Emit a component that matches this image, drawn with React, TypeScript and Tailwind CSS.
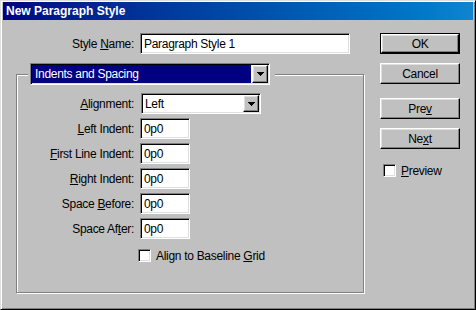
import React from "react";

const sunken =
  "border border-t-[#808080] border-l-[#808080] border-r-white border-b-white shadow-[inset_1px_1px_0_#000,inset_-1px_-1px_0_#dfdfdf]";
const raised =
  "border border-t-white border-l-white border-r-black border-b-black shadow-[inset_-1px_-1px_0_#808080,inset_1px_1px_0_#dfdfdf]";

function Arrow() {
  return (
    <svg width="7" height="4" viewBox="0 0 7 4" shapeRendering="crispEdges">
      <rect x="0" y="0" width="7" height="1" fill="#000" />
      <rect x="1" y="1" width="5" height="1" fill="#000" />
      <rect x="2" y="2" width="3" height="1" fill="#000" />
      <rect x="3" y="3" width="1" height="1" fill="#000" />
    </svg>
  );
}

function Box() {
  return <span className={`block w-[13px] h-[13px] bg-white ${sunken}`} />;
}

function Btn({ children, def }: { children: React.ReactNode; def?: boolean }) {
  if (def) {
    return (
      <div className="w-[80px] h-[21px] border border-black flex">
        <div className={`flex-1 flex items-center justify-center bg-[#c0c0c0] ${raised}`}>
          <span>{children}</span>
        </div>
      </div>
    );
  }
  return (
    <div className={`w-[80px] h-[21px] flex items-center justify-center bg-[#c0c0c0] ${raised}`}>
      <span>{children}</span>
    </div>
  );
}

function Label({ children }: { children: React.ReactNode }) {
  return (
    <div className="h-[21px] flex items-center justify-end whitespace-nowrap">
      <span>{children}</span>
    </div>
  );
}

function Field() {
  return (
    <div className={`w-[50px] h-[21px] bg-white flex items-center pl-[3px] ${sunken}`}>0p0</div>
  );
}

export default function App() {
  return (
    <div className="w-[476px] h-[310px] bg-[#c0c0c0] border border-t-[#dfdfdf] border-l-[#dfdfdf] border-r-black border-b-black shadow-[inset_1px_1px_0_#fff,inset_-1px_-1px_0_#808080] pt-[1px] px-[2px] font-['Liberation_Sans',Arial,sans-serif] text-[12px] tracking-[-0.3px] text-black leading-none">
      <div className="h-[18px] bg-gradient-to-r from-[#000080] to-[#1084d0] flex items-center pl-[3px] text-white font-bold tracking-normal">
        New Paragraph Style
      </div>
      <div className="flex pl-[13px] pt-[13px] gap-[16px]">
        <div className="w-[348px] flex flex-col">
          <div className="flex items-center h-[21px]">
            <div className="w-[118px] text-right whitespace-nowrap">
              Style <u>N</u>ame:
            </div>
            <div className={`ml-[6px] w-[210px] h-[21px] bg-white flex items-center pl-[3px] ${sunken}`}>
              Paragraph Style 1
            </div>
          </div>
          <div className="mt-[20px] h-[219px] w-[348px] border border-[#808080] shadow-[1px_1px_0_#fff,inset_1px_1px_0_#fff] flex flex-col">
            <div className="self-start -mt-[12px] ml-[11px] pl-[2px] pr-[5px] bg-[#c0c0c0]">
              <div className={`w-[240px] h-[22px] bg-white flex p-[1px] ${sunken}`}>
                <div className="flex-1 bg-[#000080] text-white flex items-center pl-[3px] mr-[1px]">
                  Indents and Spacing
                </div>
                <div className={`w-[16px] bg-[#c0c0c0] flex items-center justify-center ${raised}`}>
                  <Arrow />
                </div>
              </div>
            </div>
            <div className="mt-[8px] grid grid-cols-[117px_auto] gap-x-[6px] gap-y-[4px]">
              <Label>
                <u>A</u>lignment:
              </Label>
              <div className={`w-[120px] h-[21px] bg-white flex p-[1px] ml-[1px] ${sunken}`}>
                <div className="flex-1 flex items-center pl-[2px]">Left</div>
                <div className={`w-[16px] bg-[#c0c0c0] flex items-center justify-center ${raised}`}>
                  <Arrow />
                </div>
              </div>
              <Label>
                <u>L</u>eft Indent:
              </Label>
              <Field />
              <Label>
                <u>F</u>irst Line Indent:
              </Label>
              <Field />
              <Label>
                <u>R</u>ight Indent:
              </Label>
              <Field />
              <Label>
                Space <u>B</u>efore:
              </Label>
              <Field />
              <Label>
                Space Af<u>t</u>er:
              </Label>
              <Field />
            </div>
            <div className="mt-[10px] ml-[121px] flex items-center gap-[5px]">
              <Box />
              <span>
                Align to Baseline <u>G</u>rid
              </span>
            </div>
          </div>
        </div>
        <div className="flex flex-col">
          <Btn def>OK</Btn>
          <div className="mt-[9px]">
            <Btn>Cancel</Btn>
          </div>
          <div className="mt-[14px]">
            <Btn>
              Pre<u>v</u>
            </Btn>
          </div>
          <div className="mt-[9px]">
            <Btn>
              Ne<u>x</u>t
            </Btn>
          </div>
          <div className="mt-[15px] ml-[3px] flex items-center gap-[5px]">
            <Box />
            <span>
              <u>P</u>review
            </span>
          </div>
        </div>
      </div>
    </div>
  );
}
